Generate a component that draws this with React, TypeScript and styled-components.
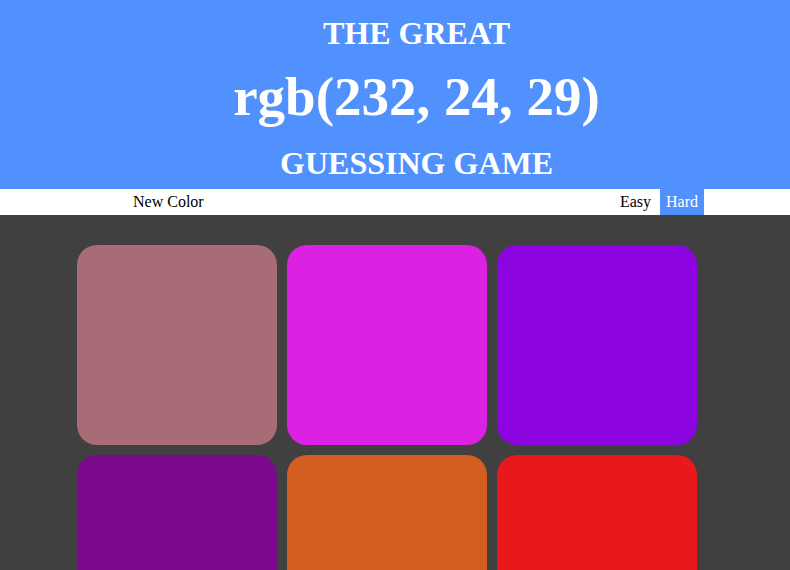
import React from "react";
import styled, { createGlobalStyle } from "styled-components";

const GlobalStyle = createGlobalStyle`
  html, body {
    margin: 0;
    padding: 0;
    background: #404040;
    font-family: "Liberation Serif", "Times New Roman", serif;
  }
`;

const Header = styled.h1`
  margin: 0;
  background: #5091fe;
  color: #ffffff;
  text-align: center;
  font-weight: bold;
  padding: 17px 0 10px 43px;
  display: flex;
  flex-direction: column;
  height: 189px;
  box-sizing: border-box;
`;

const TitleLine = styled.span<{ $size: number; $gap: number }>`
  display: block;
  font-size: ${(p) => p.$size}px;
  line-height: 1;
  margin-top: ${(p) => p.$gap}px;
`;

const Stripe = styled.div`
  background: #ffffff;
  height: 26px;
  display: flex;
  align-items: stretch;
`;

const StripeInner = styled.div`
  margin-left: 127px;
  width: 577px;
  display: flex;
  justify-content: space-between;
  align-items: stretch;
`;

const ModeGroup = styled.div`
  display: flex;
  gap: 3px;
`;

const StripeButton = styled.button<{ $active?: boolean }>`
  border: none;
  margin: 0;
  padding: 0 6px;
  font-family: "Liberation Serif", "Times New Roman", serif;
  font-size: 16px;
  background: ${(p) => (p.$active ? "#5091fe" : "#ffffff")};
  color: ${(p) => (p.$active ? "#ffffff" : "#000000")};
  cursor: pointer;
  outline: none;
`;

const Board = styled.div`
  display: grid;
  grid-template-columns: repeat(3, 200px);
  gap: 10px;
  padding: 30px 0 0 77px;
`;

const Square = styled.div<{ $color: string }>`
  width: 200px;
  height: 200px;
  border-radius: 20px;
  background: ${(p) => p.$color};
`;

const colors = [
  "rgb(168, 108, 118)",
  "rgb(219, 34, 227)",
  "rgb(140, 5, 224)",
  "rgb(122, 9, 140)",
  "rgb(212, 94, 31)",
  "rgb(232, 24, 29)",
];

export default function App() {
  return (
    <>
      <GlobalStyle />
      <Header>
        <TitleLine $size={32} $gap={0}>THE GREAT</TitleLine>
        <TitleLine $size={55} $gap={20}>rgb(232, 24, 29)</TitleLine>
        <TitleLine $size={32} $gap={23}>GUESSING GAME</TitleLine>
      </Header>
      <Stripe>
        <StripeInner>
          <StripeButton>New Color</StripeButton>
          <ModeGroup>
            <StripeButton>Easy</StripeButton>
            <StripeButton $active>Hard</StripeButton>
          </ModeGroup>
        </StripeInner>
      </Stripe>
      <Board>
        {colors.map((c, i) => (
          <Square key={i} $color={c} />
        ))}
      </Board>
    </>
  );
}
